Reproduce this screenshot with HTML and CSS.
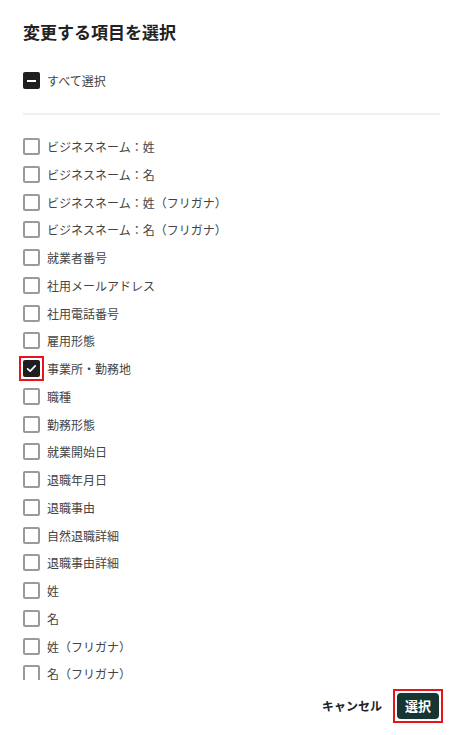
FILE: index.html
```html
<!DOCTYPE html>
<html lang="ja">
<head>
<meta charset="utf-8">
<link rel="stylesheet" href="styles.css">
</head>
<body>
<div class="dialog">
  <h1 class="title">変更する項目を選択</h1>
  <div class="row all">
    <span class="box box-ind"><span class="dash"></span></span>
    <span class="label">すべて選択</span>
  </div>
  <hr class="divider">
  <div class="list">
    <div class="row"><span class="box"></span><span class="label">ビジネスネーム：姓</span></div>
    <div class="row"><span class="box"></span><span class="label">ビジネスネーム：名</span></div>
    <div class="row"><span class="box"></span><span class="label">ビジネスネーム：姓（フリガナ）</span></div>
    <div class="row"><span class="box"></span><span class="label">ビジネスネーム：名（フリガナ）</span></div>
    <div class="row"><span class="box"></span><span class="label">就業者番号</span></div>
    <div class="row"><span class="box"></span><span class="label">社用メールアドレス</span></div>
    <div class="row"><span class="box"></span><span class="label">社用電話番号</span></div>
    <div class="row"><span class="box"></span><span class="label">雇用形態</span></div>
    <div class="row"><span class="mark"><span class="box box-checked"><svg viewBox="0 0 13 13" width="13" height="13"><path d="M2.6 6.8 L5.2 9.2 L10.2 3.9" fill="none" stroke="#fff" stroke-width="1.7" stroke-linecap="round" stroke-linejoin="round"/></svg></span></span><span class="label">事業所・勤務地</span></div>
    <div class="row"><span class="box"></span><span class="label">職種</span></div>
    <div class="row"><span class="box"></span><span class="label">勤務形態</span></div>
    <div class="row"><span class="box"></span><span class="label">就業開始日</span></div>
    <div class="row"><span class="box"></span><span class="label">退職年月日</span></div>
    <div class="row"><span class="box"></span><span class="label">退職事由</span></div>
    <div class="row"><span class="box"></span><span class="label">自然退職詳細</span></div>
    <div class="row"><span class="box"></span><span class="label">退職事由詳細</span></div>
    <div class="row"><span class="box"></span><span class="label">姓</span></div>
    <div class="row"><span class="box"></span><span class="label">名</span></div>
    <div class="row"><span class="box"></span><span class="label">姓（フリガナ）</span></div>
    <div class="row"><span class="box"></span><span class="label">名（フリガナ）</span></div>
    <div class="row"><span class="box"></span><span class="label">生年月日</span></div>
  </div>
  <div class="footer">
    <button class="btn-cancel">キャンセル</button>
    <span class="mark mark-btn"><button class="btn-select">選択</button></span>
  </div>
</div>
</body>
</html>
```
FILE: styles.css
```css
* { box-sizing: border-box; }
html, body {
  margin: 0;
  padding: 0;
  background: #fff;
}
body {
  font-family: "Noto Sans CJK JP", "Noto Sans", sans-serif;
  color: #333;
}
.dialog {
  width: 455px;
  height: 735px;
  padding: 20px 15px 0 23px;
  display: flex;
  flex-direction: column;
}
.title {
  margin: 0;
  font-size: 17px;
  line-height: 24px;
  font-weight: 700;
  color: #222;
}
.row {
  display: flex;
  align-items: center;
  height: 27.75px;
  flex-shrink: 0;
}
.all {
  margin-top: 23px;
}
.label {
  margin-left: 7px;
  font-size: 12px;
  color: #444;
  white-space: nowrap;
}
.box {
  width: 17px;
  height: 17px;
  border: 2px solid #9a9a9a;
  border-radius: 2px;
  display: inline-flex;
  align-items: center;
  justify-content: center;
  flex-shrink: 0;
}
.box-ind, .box-checked {
  background: #1f1f1f;
  border-color: #1f1f1f;
}
.dash {
  width: 9px;
  height: 2px;
  background: #fff;
}
.mark {
  display: inline-flex;
  border: 2px solid #e8141b;
  padding: 2px;
  margin: -4px;
  flex-shrink: 0;
}
.mark + .label {
  margin-left: 7px;
}
.divider {
  border: 0;
  height: 2px;
  background: #efefef;
  margin: 18px 0 18px;
}
.list {
  flex: 1;
  overflow: hidden;
  min-height: 0;
  max-height: 547px;
  margin: 0 -8px;
  padding: 0 8px;
}
.footer {
  display: flex;
  justify-content: flex-end;
  align-items: center;
  gap: 15px;
  margin-top: auto;
  padding: 0 1px 16px 0;
  height: 43px;
  flex-shrink: 0;
}
.btn-cancel {
  border: 0;
  background: transparent;
  font-family: inherit;
  font-size: 12px;
  font-weight: 700;
  color: #222;
  padding: 0;
}
.mark-btn {
  padding: 2px;
}
.btn-select {
  border: 0;
  background: #173531;
  color: #fff;
  font-family: inherit;
  font-size: 13px;
  font-weight: 700;
  border-radius: 4px;
  width: 42px;
  height: 26px;
  padding: 0;
}
```
